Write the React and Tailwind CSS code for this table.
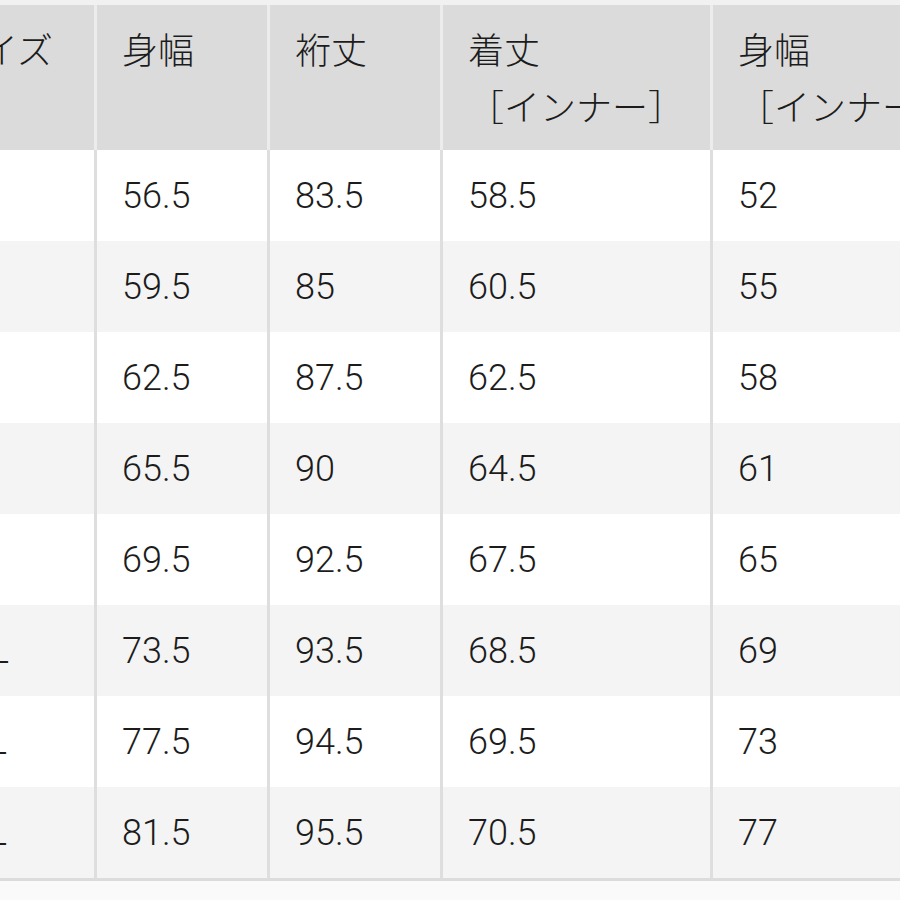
const headers = [
  ["サイズ"],
  ["身幅"],
  ["裄丈"],
  ["着丈", "［インナー］"],
  ["身幅", "［インナー］"],
];

const rows = [
  ["XS", "56.5", "83.5", "58.5", "52"],
  ["S", "59.5", "85", "60.5", "55"],
  ["M", "62.5", "87.5", "62.5", "58"],
  ["L", "65.5", "90", "64.5", "61"],
  ["XL", "69.5", "92.5", "67.5", "65"],
  ["XXL", "73.5", "93.5", "68.5", "69"],
  ["3XL", "77.5", "94.5", "69.5", "73"],
  ["4XL", "81.5", "95.5", "70.5", "77"],
];

const cols = "grid grid-cols-[176px_173px_173px_270px_280px]";
const font = { fontFamily: 'Roboto, "Noto Sans CJK JP", sans-serif' };

export default function App() {
  return (
    <div className="w-[900px] h-[900px] overflow-hidden bg-white text-[#1c1c1c] font-light" style={font}>
      <div className="h-[5px] bg-[#f1f1f1]" />
      <div className="ml-[-79px] w-[1072px]">
        <div className={`${cols} h-[145px] bg-[#dbdbdb]`}>
          {headers.map((h, i) => (
            <div
              key={i}
              className="pl-[25px] pt-[19px] text-[36px] leading-[57px] border-r-[3px] border-[#ececec] whitespace-nowrap"
            >
              {h.map((line, j) => (
                <div key={j}>{line}</div>
              ))}
            </div>
          ))}
        </div>
        {rows.map((r, ri) => (
          <div
            key={ri}
            className={`${cols} h-[91px] ${ri % 2 === 1 ? "bg-[#f4f4f4]" : "bg-white"}`}
          >
            {r.map((v, ci) => (
              <div
                key={ci}
                className="flex items-center pl-[25px] text-[36px] border-r-[3px] border-[#dedede]"
              >
                {v}
              </div>
            ))}
          </div>
        ))}
        <div className="h-[3px] bg-[#dcdcdc]" />
      </div>
      <div className="h-[19px] bg-[#fafafa]" />
    </div>
  );
}
